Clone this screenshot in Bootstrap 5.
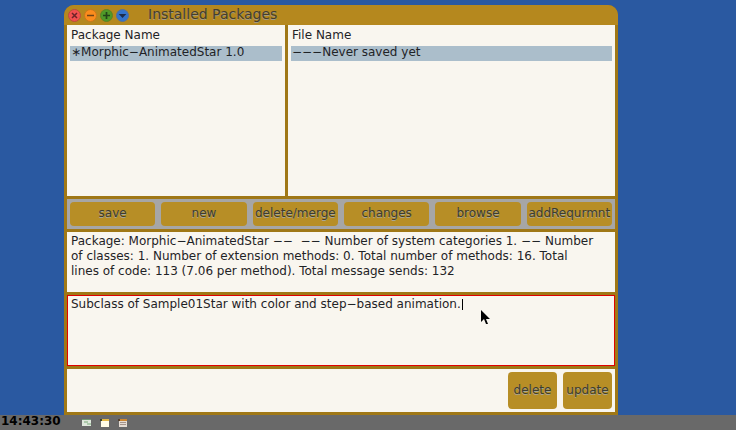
<!DOCTYPE html>
<html lang="en">
<head>
<meta charset="utf-8">
<meta name="viewport" content="width=device-width, initial-scale=1">
<title>Installed Packages</title>
<link href="https://cdn.jsdelivr.net/npm/bootstrap@5.3.0/dist/css/bootstrap.min.css" rel="stylesheet">
<style>
:root { --gold: #b5881e; --rim: #a07816; --paper: #f9f6ef; --ink: #1f2326; }
body { background: #2a59a1; color: var(--ink); font: 12px/15px "DejaVu Sans", sans-serif; }
.desk { padding: 5px 118px 0 64px; }
.pkg-window { background: var(--rim); border-radius: 10px 10px 0 0; }
.title-strip { background: var(--gold); height: 20px; padding-left: 4px; gap: 3px; border-radius: 10px 10px 0 0; }
.title-strip h1 { font-size: 14px; line-height: 18px; padding-left: 16px; color: #463e2c; font-weight: 400; text-shadow: 0 1px 0 #a39a80; }
.win-btn { width: 13px; height: 13px; margin-top: 4px; }
.win-btn svg { display: block; }
.panes, .stack { gap: 3px; }
.stack { padding: 0 3px 3px; }
.paper { background: var(--paper); }
.pane { padding: 3px; }
.pane-left { flex: 212 1 0; }
.pane-right { flex: 321 1 0; }
.pane h2 { font-size: 12px; line-height: 15px; font-weight: 400; padding: 0 1px; margin: 0 0 3px; }
.pick { background: #abbecb; color: var(--ink); line-height: 13px; padding: 0 1px 2px; }
.tools { background: #a6a6a6; padding: 3px; gap: 6px; }
.gold-btn { background: #b78e26; color: #3f3c2c; border-radius: 4px; text-shadow: 0 1px 0 #a8a694; line-height: 16px; white-space: nowrap; }
.tools .gold-btn { height: 24px; flex: 1 1 0; min-width: 0; padding: 0 0 2px; }
.info { height: 60px; padding: 2px 4px; }
.note { height: 71px; }
.note textarea { border: 1px solid #e00000; resize: none; outline: 0; padding: 1px 3px; color: var(--ink); overflow: hidden; }
.caret { left: 395px; top: 4px; width: 1px; height: 11px; background: #000; }
.pointer { left: 413px; top: 14px; }
.foot { padding: 3px; gap: 6px; }
.foot .gold-btn { width: 49px; height: 37px; padding: 0 0 2px; }
.taskbar { background: #696969; height: 15px; padding-left: 1px; }
.taskbar time { width: 81px; color: #000; font-weight: 700; line-height: 13px; }
.tasks { gap: 8px; }
.tasks button { width: 10px; height: 8px; }
.tasks svg { display: block; }
</style>
<script src="https://cdn.jsdelivr.net/npm/bootstrap@5.3.0/dist/js/bootstrap.bundle.min.js"></script>
</head>
<body class="vh-100 d-flex flex-column overflow-hidden">
<main class="desk flex-grow-1 d-flex">
  <section class="pkg-window flex-grow-1 d-flex flex-column" aria-labelledby="win-title">
    <header class="title-strip d-flex">
      <button class="win-btn p-0 border-0 bg-transparent" aria-label="Close"><svg width="13" height="13" viewBox="0 0 13 13"><circle cx="6.5" cy="6.5" r="6" fill="#f2504f" stroke="#b8503a"/><path d="M4 4l5 5M9 4l-5 5" stroke="#6d2328" stroke-width="1.5"/></svg></button>
      <button class="win-btn p-0 border-0 bg-transparent" aria-label="Collapse"><svg width="13" height="13" viewBox="0 0 13 13"><circle cx="6.5" cy="6.5" r="6" fill="#fb8c1d" stroke="#c8781c"/><path d="M3 6.500h7" stroke="#6f4316" stroke-width="1.5"/></svg></button>
      <button class="win-btn p-0 border-0 bg-transparent" aria-label="Expand"><svg width="13" height="13" viewBox="0 0 13 13"><circle cx="6.5" cy="6.5" r="6" fill="#4f9a28" stroke="#5f8325"/><path d="M3 6.500h7M6.500 3v7" stroke="#24451a" stroke-width="1.7"/></svg></button>
      <button class="win-btn p-0 border-0 bg-transparent" aria-label="Window menu"><svg width="13" height="13" viewBox="0 0 13 13"><circle cx="6.5" cy="6.5" r="6" fill="#3474cc" stroke="#55709a"/><path d="M2.700 5h7.600L6.500 9z" fill="#1c2c4c"/></svg></button>
      <h1 class="m-0" id="win-title">Installed Packages</h1>
    </header>
    <div class="stack flex-grow-1 d-flex flex-column">
      <div class="panes flex-grow-1 d-flex">
        <div class="pane pane-left paper">
          <h2>Package Name</h2>
          <button class="pick d-block w-100 border-0 text-start">∗Morphic−AnimatedStar 1.0</button>
        </div>
        <div class="pane pane-right paper">
          <h2>File Name</h2>
          <button class="pick d-block w-100 border-0 text-start">−−−Never saved yet</button>
        </div>
      </div>
      <div class="tools d-flex">
        <button class="gold-btn border-0 d-flex align-items-center justify-content-center">save</button>
        <button class="gold-btn border-0 d-flex align-items-center justify-content-center">new</button>
        <button class="gold-btn border-0 d-flex align-items-center justify-content-center">delete/merge</button>
        <button class="gold-btn border-0 d-flex align-items-center justify-content-center">changes</button>
        <button class="gold-btn border-0 d-flex align-items-center justify-content-center">browse</button>
        <button class="gold-btn border-0 d-flex align-items-center justify-content-center">addRequrmnt</button>
      </div>
      <p class="info paper m-0">Package: Morphic−AnimatedStar −− &nbsp;−− Number of system categories 1. −− Number<br>of classes: 1. Number of extension methods: 0. Total number of methods: 16. Total<br>lines of code: 113 (7.06 per method). Total message sends: 132</p>
      <div class="note position-relative">
        <textarea class="paper d-block w-100 h-100" aria-label="Package comment" spellcheck="false">Subclass of Sample01Star with color and step−based animation.</textarea>
        <span class="caret position-absolute"></span>
        <svg class="pointer position-absolute" width="10" height="16" viewBox="0 0 10 16"><path d="M1 1v12l3-3 2 5h2l-2-5h4z" fill="#000"/></svg>
      </div>
      <footer class="foot paper d-flex justify-content-end">
        <button class="gold-btn border-0 d-flex align-items-center justify-content-center">delete</button>
        <button class="gold-btn border-0 d-flex align-items-center justify-content-center">update</button>
      </footer>
    </div>
  </section>
</main>
<div class="taskbar d-flex">
  <time>14:43:30</time>
  <div class="tasks d-flex align-items-center">
    <button class="border-0 p-0 bg-transparent" aria-label="Transcript"><svg width="10" height="8" viewBox="0 0 10 8"><path d="M0 1h9v6H0z" fill="#dfe8dc"/><path d="M0 0h9v1H0z" fill="#6f9670"/><path d="M2 3h4M5 5h4" stroke="#79a878"/></svg></button>
    <button class="border-0 p-0 bg-transparent" aria-label="Workspace"><svg width="10" height="8" viewBox="0 0 10 8"><path d="M1 1h8v7H1z" fill="#fffce8"/><path d="M1 0h8v2H1z" fill="#e3b744"/><path d="M0 0h2v2H0z" fill="#34402c"/></svg></button>
    <button class="border-0 p-0 bg-transparent" aria-label="Packages"><svg width="10" height="8" viewBox="0 0 10 8"><path d="M1 1h8v7H1z" fill="#e5dcd3"/><path d="M1 0h8v2H1z" fill="#cc8731"/><path d="M2 3.500h6M2 5.500h6" stroke="#a5948b"/><path d="M0 0h2v2H0z" fill="#57412c"/></svg></button>
  </div>
</div>
</body>
</html>
